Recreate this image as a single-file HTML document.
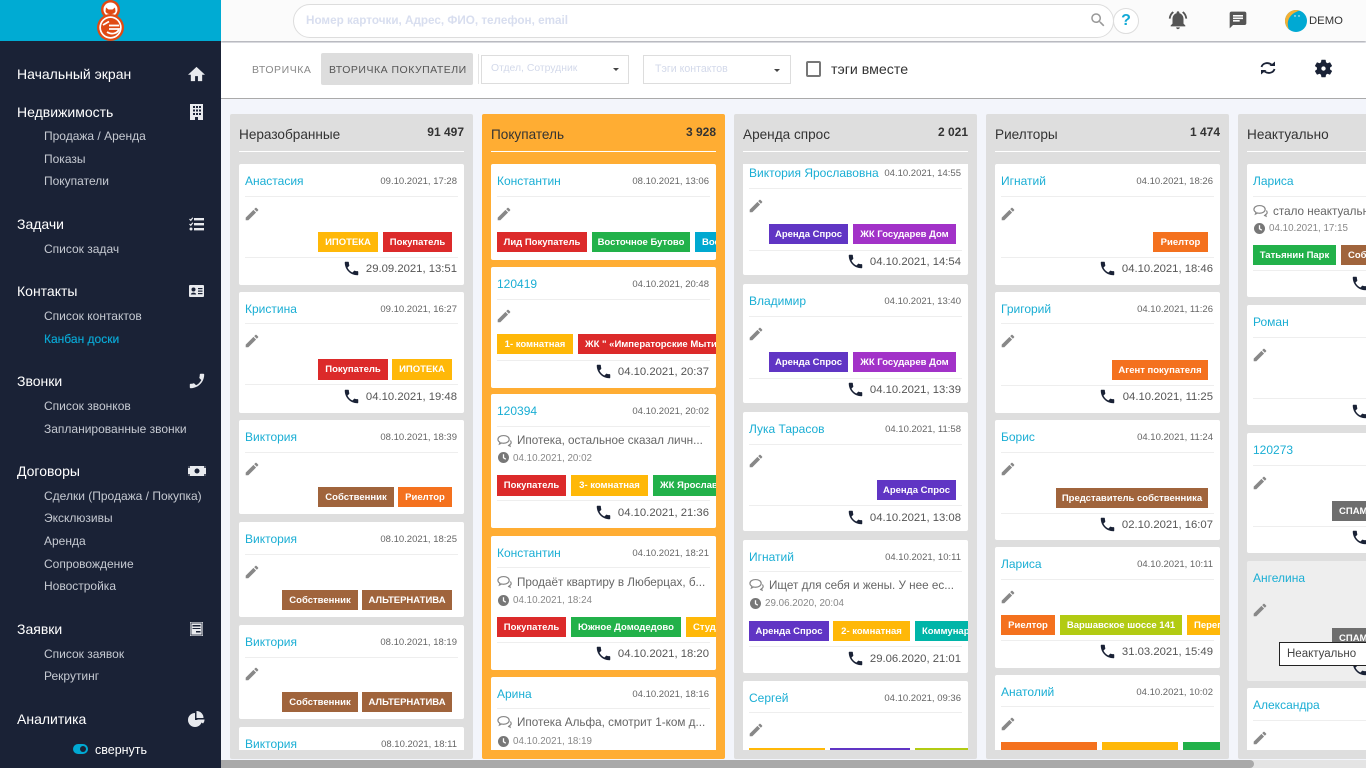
<!DOCTYPE html>
<html lang="ru">
<head>
<meta charset="utf-8">
<title>Канбан доски</title>
<style>
*{box-sizing:border-box}
html,body{margin:0;padding:0;width:1366px;height:768px;overflow:hidden;background:#f3f5fb;font-family:"Liberation Sans","Noto Sans CJK SC",sans-serif}
.a,.a *{position:absolute}
.a{left:0;top:0;width:1366px;height:768px;overflow:hidden}
div,span,svg{white-space:nowrap}
.side{left:0;top:0;width:221px;height:768px;background:#1a2236}
.band{left:0;top:0;width:221px;height:41px;background:#00abd3}
.h{left:17px;height:20px;line-height:20px;font-size:14px;color:#fff}
.s{left:44px;height:20px;line-height:20px;font-size:12px;color:#c6cad2;margin-top:1px}
.col{top:114px;width:243px;height:645px;background:#dedede;border-radius:2px}
.ct{top:126px;font-size:13.6px;line-height:18px;height:18px;color:#333}
.cc{top:124px;font-size:12px;font-weight:bold;line-height:16px;height:16px;color:#333;width:80px;text-align:right}
.cl{top:151px;width:225px;height:1px;background:#fff}
.clip{left:0;top:0;width:1366px;height:768px}
.card{left:var(--x);width:225px;background:#fff;border-radius:2px}
.n{left:calc(var(--x) + 6px);height:16px;line-height:16px;font-size:12px;color:#1aaed4;margin-top:1px}
.d{left:calc(var(--x) + 99px);width:119px;text-align:right;height:14px;line-height:14px;font-size:9.5px;color:#666;margin-top:1px}
.l{left:calc(var(--x) + 6px);width:213px;height:1px;background:#eee}
.pen{left:calc(var(--x) + 6px);width:14px;height:14px;fill:#888}
.ph{left:calc(var(--x) + 105px);width:15px;height:15px;fill:#1a2236;margin-top:1px}
.pt{left:calc(var(--x) + 99px);width:119px;text-align:right;height:16px;line-height:16px;font-size:11.3px;color:#555;margin-top:1px}
.cm{left:calc(var(--x) + 6px);width:15px;height:14px;fill:none;stroke:#888;stroke-width:1.3}
.ctx{left:calc(var(--x) + 26px);height:16px;line-height:16px;font-size:11.7px;color:#666;margin-top:1px}
.ck{left:calc(var(--x) + 7px);width:11px;height:11px}
.tx{left:calc(var(--x) + 22px);height:14px;line-height:14px;font-size:9.8px;color:#888;margin-top:1px}
.t{height:20px;line-height:21px;font-size:9.5px;font-weight:bold;color:#fff;text-align:center;overflow:hidden}
.tl{text-align:left;padding-left:7px}
.y{background:#ffb808}.r{background:#dc2a2a}.g{background:#22b14a}.b{background:#00a9d0}.p{background:#6035c4}.v{background:#a232c8}.br{background:#a0643c}.o{background:#f4711e}.li{background:#b2cb13}.te{background:#00b5a8}.gr{background:#6e6e6e}
</style>
</head>
<body>
<svg width="0" height="0" style="position:absolute">
<defs>
<symbol id="i-ph" viewBox="2 2 20 20"><path d="M6.620 10.790c1.440 2.830 3.760 5.140 6.590 6.590l2.200-2.200c.27-.27.67-.36 1.020-.24 1.120.37 2.330.57 3.570.57.55 0 1 .45 1 1V20c0 .55-.45 1-1 1-9.390 0-17-7.610-17-17 0-.55.45-1 1-1h3.500c.55 0 1 .45 1 1 0 1.250.2 2.450.57 3.570.11.35.03.74-.25 1.020l-2.200 2.200z"/></symbol>
<symbol id="i-pen" viewBox="2 2 20 20"><path d="M3 17.250V21h3.750L17.810 9.940l-3.750-3.750L3 17.250zM20.710 7.040c.39-.39.39-1.020 0-1.410l-2.340-2.340c-.39-.39-1.020-.39-1.410 0l-1.830 1.830 3.750 3.750 1.830-1.830z"/></symbol>
<symbol id="i-cm" viewBox="0 0 16 14"><path d="M7 1.200C3.600 1.200 1 3 1 5.300c0 1.300.9 2.400 2.200 3.200L2.600 10.300l2.400-1.200c.6.2 1.300.3 2 .3 3.400 0 6-1.800 6-4.100S10.400 1.200 7 1.200z"/><path d="M14.200 6.500c.6.600.9 1.200.9 1.900 0 1-.7 1.900-1.700 2.500l.5 1.600-2.200-1"/></symbol>
<symbol id="i-ck" viewBox="0 0 12 12"><circle cx="6" cy="6" r="6" fill="#777"/><path d="M6 2.500V6.300L8.500 7.800" stroke="#fff" stroke-width="1.400" fill="none"/></symbol>
</defs>
</svg>
<div class="a">

<!-- top bars -->
<div style="left:221px;top:0;width:1145px;height:41px;background:#fbfbfb;box-shadow:0 1px 2px rgba(0,0,0,.35)"></div>
<div style="left:221px;top:43px;width:1145px;height:56px;background:#fff;border-bottom:1px solid #aaa"></div>

<div style="left:293px;top:4px;width:821px;height:34px;background:#fff;border:1px solid #ddd;border-radius:17px"></div>
<div style="left:306px;top:13px;height:16px;line-height:16px;font-size:11.7px;font-weight:bold;color:#d8deef">Номер карточки, Адрес, ФИО, телефон, email</div>
<svg style="left:1089px;top:11px" width="18" height="18" viewBox="0 0 24 24" fill="#999"><path d="M15.500 14h-.79l-.28-.27C15.410 12.590 16 11.110 16 9.500 16 5.910 13.090 3 9.500 3S3 5.910 3 9.500 5.910 16 9.500 16c1.610 0 3.090-.59 4.230-1.570l.27.28v.79l5 4.990L20.490 19l-4.990-5zm-6 0C7.010 14 5 11.990 5 9.500S7.010 5 9.500 5 14 7.010 14 9.500 11.990 14 9.500 14z"/></svg>
<div style="left:1113px;top:8px;width:26px;height:26px;border:1px solid #ddd;border-radius:50%;background:#fff;text-align:center;line-height:24px;font-size:16px;font-weight:bold;color:#12a9d6">?</div>
<svg style="left:1167px;top:9px" width="22" height="22" viewBox="0 0 24 24" fill="#555"><path d="M7.580 4.080L6.150 2.650C3.750 4.480 2.170 7.300 2.030 10.500h2c.15-2.650 1.510-4.970 3.550-6.420zm12.390 6.420h2c-.15-3.200-1.730-6.020-4.120-7.850l-1.420 1.430c2.020 1.450 3.390 3.770 3.540 6.420zM18 11c0-3.070-1.640-5.640-4.500-6.320V4c0-.83-.67-1.500-1.500-1.500s-1.500.67-1.500 1.500v.68C7.630 5.360 6 7.920 6 11v5l-2 2v1h16v-1l-2-2v-5zm-6 11c.14 0 .27-.01.4-.04.65-.14 1.180-.58 1.440-1.180.1-.24.15-.5.15-.78h-4c.01 1.100.9 2 2.010 2z"/></svg>
<svg style="left:1228px;top:10px" width="20" height="20" viewBox="0 0 24 24" fill="#555"><path d="M20 2H4c-1.100 0-1.990.9-1.990 2L2 22l4-4h14c1.100 0 2-.9 2-2V4c0-1.100-.9-2-2-2zM6 9h12v2H6V9zm8 5H6v-2h8v2zm4-6H6V6h12v2z"/></svg>
<svg style="left:1285px;top:10px" width="22" height="22" viewBox="0 0 22 22"><circle cx="11" cy="11" r="11" fill="#00a9d3"/><path d="M11 0A11 11 0 0 0 4 19.500C1 13 3 4 14.500 .6 13.400.2 12.200 0 11 0z" fill="#f2b035"/><circle cx="10" cy="6" r=".7" fill="#fff"/><circle cx="14" cy="6" r=".7" fill="#fff"/></svg>
<div style="left:1309px;top:13px;height:16px;line-height:16px;font-size:11.3px;color:#333">DEMO</div>

<div style="left:252px;top:62px;height:16px;line-height:16px;font-size:10.5px;letter-spacing:.55px;color:#888">ВТОРИЧКА</div>
<div style="left:321px;top:53px;width:152px;height:32px;background:#ddd;border-radius:2px"></div>
<div style="left:329px;top:62px;height:16px;line-height:16px;font-size:10.5px;letter-spacing:.5px;color:#555">ВТОРИЧКА ПОКУПАТЕЛИ</div>
<div style="left:478px;top:54px;width:1px;height:30px;background:#e5e5e5"></div>
<div style="left:481px;top:55px;width:148px;height:29px;background:#fff;border:1px solid #ddd"></div>
<div style="left:491px;top:62px;height:14px;line-height:14px;font-size:10.4px;color:#d3d9ea">Отдел, Сотрудник</div>
<div style="left:613px;top:68px;width:0;height:0;border:3px solid transparent;border-top:3px solid #444"></div>
<div style="left:643px;top:55px;width:148px;height:29px;background:#fff;border:1px solid #ddd"></div>
<div style="left:655px;top:62px;height:14px;line-height:14px;font-size:10.6px;color:#d3d9ea">Тэги контактов</div>
<div style="left:774px;top:69px;width:0;height:0;border:3px solid transparent;border-top:3px solid #444"></div>
<div style="left:806px;top:61px;width:15px;height:16px;border:2px solid #777;border-radius:2px;background:#fff"></div>
<div style="left:831px;top:61px;height:18px;line-height:18px;font-size:14.2px;color:#333">тэги вместе</div>
<svg style="left:1258px;top:58px" width="20" height="20" viewBox="0 0 20 20" fill="none" stroke="#1a2236" stroke-width="1.800"><path d="M3.500 9C4.300 5.800 8.800 3.500 13.500 6.500"/><path d="M16.500 11C15.700 14.200 11.200 16.500 6.500 13.500"/><path d="M11.500 8H17V3.500z" fill="#1a2236" stroke="none"/><path d="M8.500 12H3v4.500z" fill="#1a2236" stroke="none"/></svg>
<svg style="left:1313px;top:58px" width="21" height="21" viewBox="0 0 24 24" fill="#1a2236"><path d="M19.430 12.980c.04-.32.07-.64.07-.98s-.03-.66-.07-.98l2.110-1.650c.19-.15.24-.42.12-.64l-2-3.460c-.12-.22-.39-.3-.61-.22l-2.490 1c-.52-.4-1.080-.73-1.690-.98l-.38-2.650C14.460 2.180 14.250 2 14 2h-4c-.25 0-.46.18-.49.42l-.38 2.650c-.61.25-1.170.59-1.690.98l-2.490-1c-.23-.09-.49 0-.61.22l-2 3.460c-.13.22-.07.49.12.64l2.110 1.650c-.04.32-.07.65-.07.98s.03.66.07.98l-2.110 1.650c-.19.15-.24.42-.12.64l2 3.460c.12.22.39.3.61.22l2.490-1c.52.4 1.080.73 1.690.98l.38 2.650c.03.24.24.42.49.42h4c.25 0 .46-.18.49-.42l.38-2.650c.61-.25 1.170-.59 1.690-.98l2.490 1c.23.09.49 0 .61-.22l2-3.460c.12-.22.07-.49-.12-.64l-2.110-1.650z"/><circle cx="12" cy="12" r="2.500" fill="#fff"/></svg>

<!-- columns -->
<div class="col" style="left:230px"></div>
<div class="col" style="left:482px;background:#ffad33"></div>
<div class="col" style="left:734px"></div>
<div class="col" style="left:986px"></div>
<div class="col" style="left:1238px;width:140px"></div>

<div class="ct" style="left:239px">Неразобранные</div><div class="cc" style="left:384px">91 497</div><div class="cl" style="left:239px"></div>
<div class="ct" style="left:491px">Покупатель</div><div class="cc" style="left:636px">3 928</div><div class="cl" style="left:491px"></div>
<div class="ct" style="left:743px">Аренда спрос</div><div class="cc" style="left:888px">2 021</div><div class="cl" style="left:743px"></div>
<div class="ct" style="left:995px">Риелторы</div><div class="cc" style="left:1140px">1 474</div><div class="cl" style="left:995px"></div>
<div class="ct" style="left:1247px">Неактуально</div><div class="cl" style="left:1247px"></div>

<!-- column 1 -->
<div class="clip" style="--x:239px;clip-path:inset(164px 902px 18px 239px)">
<div class="card" style="top:164px;height:121px"></div>
<div class="n" style="top:172px">Анастасия</div><div class="d" style="top:174px">09.10.2021, 17:28</div><div class="l" style="top:196px"></div>
<svg class="pen" style="top:207px"><use href="#i-pen"/></svg>
<div class="t y" style="left:318px;top:232px;width:60px">ИПОТЕКА</div><div class="t r" style="left:383px;top:232px;width:69px">Покупатель</div>
<div class="l" style="top:257px"></div><svg class="ph" style="top:260px"><use href="#i-ph"/></svg><div class="pt" style="top:260px">29.09.2021, 13:51</div>

<div class="card" style="top:292px;height:121px"></div>
<div class="n" style="top:300px">Кристина</div><div class="d" style="top:302px">09.10.2021, 16:27</div><div class="l" style="top:323px"></div>
<svg class="pen" style="top:334px"><use href="#i-pen"/></svg>
<div class="t r" style="left:318px;top:359px;width:70px;height:21px;line-height:22px">Покупатель</div><div class="t y" style="left:392px;top:359px;width:60px;height:21px;line-height:22px">ИПОТЕКА</div>
<div class="l" style="top:384px"></div><svg class="ph" style="top:388px"><use href="#i-ph"/></svg><div class="pt" style="top:388px">04.10.2021, 19:48</div>

<div class="card" style="top:420px;height:94px"></div>
<div class="n" style="top:428px">Виктория</div><div class="d" style="top:430px">08.10.2021, 18:39</div><div class="l" style="top:452px"></div>
<svg class="pen" style="top:462px"><use href="#i-pen"/></svg>
<div class="t br" style="left:318px;top:487px;width:76px">Собственник</div><div class="t o" style="left:398px;top:487px;width:54px">Риелтор</div>

<div class="card" style="top:522px;height:95px"></div>
<div class="n" style="top:530px">Виктория</div><div class="d" style="top:532px">08.10.2021, 18:25</div><div class="l" style="top:554px"></div>
<svg class="pen" style="top:565px"><use href="#i-pen"/></svg>
<div class="t br" style="left:282px;top:590px;width:76px">Собственник</div><div class="t br" style="left:362px;top:590px;width:90px">АЛЬТЕРНАТИВА</div>

<div class="card" style="top:625px;height:94px"></div>
<div class="n" style="top:633px">Виктория</div><div class="d" style="top:635px">08.10.2021, 18:19</div><div class="l" style="top:657px"></div>
<svg class="pen" style="top:667px"><use href="#i-pen"/></svg>
<div class="t br" style="left:282px;top:692px;width:76px">Собственник</div><div class="t br" style="left:362px;top:692px;width:90px">АЛЬТЕРНАТИВА</div>

<div class="card" style="top:727px;height:40px"></div>
<div class="n" style="top:735px">Виктория</div><div class="d" style="top:737px">08.10.2021, 18:11</div>
</div>

<!-- column 2 -->
<div class="clip" style="--x:491px;clip-path:inset(164px 650px 18px 491px)">
<div class="card" style="top:164px;height:96px"></div>
<div class="n" style="top:172px">Константин</div><div class="d" style="top:174px">08.10.2021, 13:06</div><div class="l" style="top:196px"></div>
<svg class="pen" style="top:207px"><use href="#i-pen"/></svg>
<div class="t r" style="left:497px;top:232px;width:90px">Лид Покупатель</div><div class="t g" style="left:592px;top:232px;width:98px">Восточное Бутово</div><div class="t b tl" style="left:695px;top:232px;width:60px">Восточное</div>

<div class="card" style="top:267px;height:121px"></div>
<div class="n" style="top:275px">120419</div><div class="d" style="top:277px">04.10.2021, 20:48</div><div class="l" style="top:299px"></div>
<svg class="pen" style="top:309px"><use href="#i-pen"/></svg>
<div class="t y" style="left:497px;top:334px;width:76px">1- комнатная</div><div class="t r tl" style="left:578px;top:334px;width:180px">ЖК " «Императорские Мытищи»</div>
<div class="l" style="top:360px"></div><svg class="ph" style="top:363px"><use href="#i-ph"/></svg><div class="pt" style="top:363px">04.10.2021, 20:37</div>

<div class="card" style="top:394px;height:134px"></div>
<div class="n" style="top:402px">120394</div><div class="d" style="top:404px">04.10.2021, 20:02</div><div class="l" style="top:426px"></div>
<svg class="cm" style="top:434px"><use href="#i-cm"/></svg><div class="ctx" style="top:432px">Ипотека, остальное сказал личн...</div>
<svg class="ck" style="top:452px"><use href="#i-ck"/></svg><div class="tx" style="top:451px">04.10.2021, 20:02</div>
<div class="t r" style="left:497px;top:475px;width:69px;height:21px;line-height:22px">Покупатель</div><div class="t y" style="left:571px;top:475px;width:77px;height:21px;line-height:22px">3- комнатная</div><div class="t g tl" style="left:653px;top:475px;width:90px;height:21px;line-height:22px">ЖК Ярославский</div>
<div class="l" style="top:500px"></div><svg class="ph" style="top:504px"><use href="#i-ph"/></svg><div class="pt" style="top:504px">04.10.2021, 21:36</div>

<div class="card" style="top:536px;height:134px"></div>
<div class="n" style="top:544px">Константин</div><div class="d" style="top:546px">04.10.2021, 18:21</div><div class="l" style="top:567px"></div>
<svg class="cm" style="top:575px"><use href="#i-cm"/></svg><div class="ctx" style="top:574px">Продаёт квартиру в Люберцах, б...</div>
<svg class="ck" style="top:595px"><use href="#i-ck"/></svg><div class="tx" style="top:593px">04.10.2021, 18:24</div>
<div class="t r" style="left:497px;top:617px;width:69px">Покупатель</div><div class="t g" style="left:571px;top:617px;width:110px">Южное Домодедово</div><div class="t y tl" style="left:686px;top:617px;width:80px">Студия</div>
<div class="l" style="top:642px"></div><svg class="ph" style="top:645px"><use href="#i-ph"/></svg><div class="pt" style="top:645px">04.10.2021, 18:20</div>

<div class="card" style="top:677px;height:90px"></div>
<div class="n" style="top:685px">Арина</div><div class="d" style="top:687px">04.10.2021, 18:16</div><div class="l" style="top:708px"></div>
<svg class="cm" style="top:715px"><use href="#i-cm"/></svg><div class="ctx" style="top:714px">Ипотека Альфа, смотрит 1-ком д...</div>
<svg class="ck" style="top:736px"><use href="#i-ck"/></svg><div class="tx" style="top:734px">04.10.2021, 18:19</div>
</div>

<!-- column 3 -->
<div class="clip" style="--x:743px;clip-path:inset(164px 398px 18px 743px)">
<div class="card" style="top:156px;height:119px"></div>
<div class="n" style="top:164px">Виктория Ярославовна</div><div class="d" style="top:166px">04.10.2021, 14:55</div><div class="l" style="top:188px"></div>
<svg class="pen" style="top:199px"><use href="#i-pen"/></svg>
<div class="t p" style="left:769px;top:224px;width:79px">Аренда Спрос</div><div class="t v" style="left:853px;top:224px;width:103px">ЖК Государев Дом</div>
<div class="l" style="top:250px"></div><svg class="ph" style="top:253px"><use href="#i-ph"/></svg><div class="pt" style="top:253px">04.10.2021, 14:54</div>

<div class="card" style="top:284px;height:119px"></div>
<div class="n" style="top:292px">Владимир</div><div class="d" style="top:294px">04.10.2021, 13:40</div><div class="l" style="top:316px"></div>
<svg class="pen" style="top:327px"><use href="#i-pen"/></svg>
<div class="t p" style="left:769px;top:352px;width:79px">Аренда Спрос</div><div class="t v" style="left:853px;top:352px;width:103px">ЖК Государев Дом</div>
<div class="l" style="top:378px"></div><svg class="ph" style="top:381px"><use href="#i-ph"/></svg><div class="pt" style="top:381px">04.10.2021, 13:39</div>

<div class="card" style="top:412px;height:119px"></div>
<div class="n" style="top:420px">Лука Тарасов</div><div class="d" style="top:422px">04.10.2021, 11:58</div><div class="l" style="top:444px"></div>
<svg class="pen" style="top:454px"><use href="#i-pen"/></svg>
<div class="t p" style="left:877px;top:480px;width:79px">Аренда Спрос</div>
<div class="l" style="top:505px"></div><svg class="ph" style="top:509px"><use href="#i-ph"/></svg><div class="pt" style="top:509px">04.10.2021, 13:08</div>

<div class="card" style="top:540px;height:133px"></div>
<div class="n" style="top:548px">Игнатий</div><div class="d" style="top:550px">04.10.2021, 10:11</div><div class="l" style="top:571px"></div>
<svg class="cm" style="top:578px"><use href="#i-cm"/></svg><div class="ctx" style="top:577px">Ищет для себя и жены. У нее ес...</div>
<svg class="ck" style="top:598px"><use href="#i-ck"/></svg><div class="tx" style="top:596px">29.06.2020, 20:04</div>
<div class="t p" style="left:749px;top:621px;width:80px">Аренда Спрос</div><div class="t y" style="left:833px;top:621px;width:77px">2- комнатная</div><div class="t te tl" style="left:915px;top:621px;width:80px">Коммунарка</div>
<div class="l" style="top:646px"></div><svg class="ph" style="top:650px"><use href="#i-ph"/></svg><div class="pt" style="top:650px">29.06.2020, 21:01</div>

<div class="card" style="top:681px;height:90px"></div>
<div class="n" style="top:689px">Сергей</div><div class="d" style="top:691px">04.10.2021, 09:36</div><div class="l" style="top:712px"></div>
<svg class="pen" style="top:723px"><use href="#i-pen"/></svg>
<div class="t y" style="left:749px;top:748px;width:76px"></div><div class="t p" style="left:830px;top:748px;width:80px"></div><div class="t li" style="left:915px;top:748px;width:80px"></div>
</div>

<!-- column 4 -->
<div class="clip" style="--x:995px;clip-path:inset(164px 146px 18px 995px)">
<div class="card" style="top:164px;height:121px"></div>
<div class="n" style="top:172px">Игнатий</div><div class="d" style="top:174px">04.10.2021, 18:26</div><div class="l" style="top:196px"></div>
<svg class="pen" style="top:207px"><use href="#i-pen"/></svg>
<div class="t o" style="left:1153px;top:232px;width:55px">Риелтор</div>
<div class="l" style="top:257px"></div><svg class="ph" style="top:260px"><use href="#i-ph"/></svg><div class="pt" style="top:260px">04.10.2021, 18:46</div>

<div class="card" style="top:292px;height:121px"></div>
<div class="n" style="top:300px">Григорий</div><div class="d" style="top:302px">04.10.2021, 11:26</div><div class="l" style="top:323px"></div>
<svg class="pen" style="top:334px"><use href="#i-pen"/></svg>
<div class="t o" style="left:1112px;top:360px;width:96px">Агент покупателя</div>
<div class="l" style="top:385px"></div><svg class="ph" style="top:388px"><use href="#i-ph"/></svg><div class="pt" style="top:388px">04.10.2021, 11:25</div>

<div class="card" style="top:420px;height:120px"></div>
<div class="n" style="top:428px">Борис</div><div class="d" style="top:430px">04.10.2021, 11:24</div><div class="l" style="top:452px"></div>
<svg class="pen" style="top:462px"><use href="#i-pen"/></svg>
<div class="t br" style="left:1056px;top:488px;width:152px">Представитель собственника</div>
<div class="l" style="top:513px"></div><svg class="ph" style="top:516px"><use href="#i-ph"/></svg><div class="pt" style="top:516px">02.10.2021, 16:07</div>

<div class="card" style="top:547px;height:121px"></div>
<div class="n" style="top:555px">Лариса</div><div class="d" style="top:557px">04.10.2021, 10:11</div><div class="l" style="top:579px"></div>
<svg class="pen" style="top:590px"><use href="#i-pen"/></svg>
<div class="t o" style="left:1001px;top:615px;width:54px">Риелтор</div><div class="t li" style="left:1060px;top:615px;width:122px">Варшавское шоссе 141</div><div class="t y tl" style="left:1187px;top:615px;width:80px">Перепланировка</div>
<div class="l" style="top:640px"></div><svg class="ph" style="top:643px"><use href="#i-ph"/></svg><div class="pt" style="top:643px">31.03.2021, 15:49</div>

<div class="card" style="top:675px;height:95px"></div>
<div class="n" style="top:683px">Анатолий</div><div class="d" style="top:685px">04.10.2021, 10:02</div><div class="l" style="top:706px"></div>
<svg class="pen" style="top:717px"><use href="#i-pen"/></svg>
<div class="t o" style="left:1001px;top:742px;width:96px"></div><div class="t y" style="left:1102px;top:742px;width:76px"></div><div class="t g" style="left:1183px;top:742px;width:60px"></div>
</div>

<!-- column 5 -->
<div class="clip" style="--x:1247px;clip-path:inset(164px 0 18px 1247px)">
<div class="card" style="top:164px;height:133px"></div>
<div class="n" style="top:172px">Лариса</div><div class="l" style="top:196px"></div>
<svg class="cm" style="top:204px"><use href="#i-cm"/></svg><div class="ctx" style="top:203px">стало неактуально</div>
<svg class="ck" style="top:223px"><use href="#i-ck"/></svg><div class="tx" style="top:221px">04.10.2021, 17:15</div>
<div class="t g" style="left:1253px;top:245px;width:83px">Татьянин Парк</div><div class="t br tl" style="left:1341px;top:245px;width:80px">Собственник</div>
<div class="l" style="top:270px"></div><svg class="ph" style="top:275px"><use href="#i-ph"/></svg>

<div class="card" style="top:305px;height:120px"></div>
<div class="n" style="top:313px">Роман</div><div class="l" style="top:337px"></div>
<svg class="pen" style="top:348px"><use href="#i-pen"/></svg>
<div class="l" style="top:398px"></div><svg class="ph" style="top:403px"><use href="#i-ph"/></svg>

<div class="card" style="top:433px;height:120px"></div>
<div class="n" style="top:441px">120273</div><div class="l" style="top:465px"></div>
<svg class="pen" style="top:476px"><use href="#i-pen"/></svg>
<div class="t gr tl" style="left:1332px;top:501px;width:60px">СПАМ</div>
<div class="l" style="top:526px"></div><svg class="ph" style="top:529px"><use href="#i-ph"/></svg>

<div class="card" style="top:561px;height:120px;background:#eee"></div>
<div class="n" style="top:569px">Ангелина</div>
<svg class="pen" style="top:603px"><use href="#i-pen"/></svg>
<div class="t gr tl" style="left:1332px;top:628px;width:60px">СПАМ</div>
<svg class="ph" style="top:660px"><use href="#i-ph"/></svg>

<div class="card" style="top:688px;height:90px"></div>
<div class="n" style="top:696px">Александра</div><div class="l" style="top:720px"></div>
<svg class="pen" style="top:731px"><use href="#i-pen"/></svg>
</div>

<div style="left:1279px;top:642px;width:88px;height:24px;background:#fff;border:1px solid #222;line-height:22px;font-size:11.5px;color:#444;padding-left:7px">Неактуально</div>

<!-- scrollbar -->
<div style="left:221px;top:760px;width:1145px;height:8px;background:#e4e4e4"></div>
<div style="left:221px;top:760px;width:1033px;height:8px;background:#a9a9a9;border-radius:0 4px 4px 0"></div>

<!-- sidebar -->
<div class="side"></div>
<div class="band"></div>
<svg style="left:96px;top:0" width="29" height="41" viewBox="0 0 29 41">
<circle cx="14.500" cy="9.500" r="9.500" fill="#e04a14"/>
<circle cx="14.500" cy="9.500" r="7" fill="#fff"/>
<path d="M9.500 11.500L10 7.500 12.500 9.500H16.500L19 7.500 19.500 11.500C18 15 11 15 9.500 11.500z" fill="#e04a14"/>
<circle cx="14.500" cy="27.500" r="13.500" fill="#e04a14"/>
<circle cx="14.500" cy="27.500" r="11.200" fill="#fff"/>
<circle cx="14.500" cy="27.500" r="9.500" fill="#e04a14"/>
<path d="M7 25L13 21.500M13 29H23C22 33.500 15.500 35 11 32" fill="none" stroke="#fff" stroke-width="1.800"/>
<path d="M13 25.500H23" stroke="#fff" stroke-width="1.800"/>
</svg>

<div class="h" style="top:64px">Начальный экран</div>
<div class="h" style="top:102px">Недвижимость</div>
<div class="s" style="top:125px">Продажа / Аренда</div>
<div class="s" style="top:148px">Показы</div>
<div class="s" style="top:170px">Покупатели</div>
<div class="h" style="top:214px">Задачи</div>
<div class="s" style="top:238px">Список задач</div>
<div class="h" style="top:281px">Контакты</div>
<div class="s" style="top:305px">Список контактов</div>
<div class="s" style="top:328px;color:#0aa6d2;text-shadow:0 0 .4px #0aa6d2">Канбан доски</div>
<div class="h" style="top:371px">Звонки</div>
<div class="s" style="top:395px">Список звонков</div>
<div class="s" style="top:418px">Запланированные звонки</div>
<div class="h" style="top:461px">Договоры</div>
<div class="s" style="top:485px">Сделки (Продажа / Покупка)</div>
<div class="s" style="top:507px">Эксклюзивы</div>
<div class="s" style="top:530px">Аренда</div>
<div class="s" style="top:553px">Сопровождение</div>
<div class="s" style="top:575px">Новостройка</div>
<div class="h" style="top:619px">Заявки</div>
<div class="s" style="top:643px">Список заявок</div>
<div class="s" style="top:665px">Рекрутинг</div>
<div class="h" style="top:709px">Аналитика</div>

<svg style="left:188px;top:66px" width="17" height="16" viewBox="0 0 24 22" fill="#e8eaee"><path d="M10 21v-7h4v7h6v-9h4L12 1 0 12h4v9z"/></svg>
<svg style="left:190px;top:104px" width="13" height="16" viewBox="0 0 13 16"><rect width="13" height="16" fill="#e8eaee"/><g fill="#1a2236"><rect x="3" y="2" width="2" height="2"/><rect x="6" y="2" width="2" height="2"/><rect x="9" y="2" width="2" height="2"/><rect x="3" y="5.500" width="2" height="2"/><rect x="6" y="5.500" width="2" height="2"/><rect x="9" y="5.500" width="2" height="2"/><rect x="3" y="9" width="2" height="2"/><rect x="6" y="9" width="2" height="2"/><rect x="9" y="9" width="2" height="2"/><rect x="5" y="13" width="3" height="3"/></g></svg>
<svg style="left:189px;top:217px" width="15" height="14" viewBox="0 0 15 14" fill="#e8eaee"><rect x="5" y="1" width="10" height="2.400"/><rect x="5" y="6" width="10" height="2.400"/><rect x="5" y="11" width="10" height="2.400"/><path d="M.5 2L1.800 3.300 3.800.8" fill="none" stroke="#e8eaee" stroke-width="1.200"/><path d="M.5 7L1.800 8.300 3.800 5.800" fill="none" stroke="#e8eaee" stroke-width="1.200"/><circle cx="2" cy="12" r="1.500"/></svg>
<svg style="left:189px;top:285px" width="15" height="12" viewBox="0 0 15 12"><rect width="15" height="12" rx="1" fill="#e8eaee"/><circle cx="4.500" cy="4.500" r="2" fill="#1a2236"/><path d="M1.800 9.500C2 7 7 7 7.200 9.500z" fill="#1a2236"/><g fill="#1a2236"><rect x="9" y="3" width="4.500" height="1.200"/><rect x="9" y="5.500" width="4.500" height="1.200"/><rect x="9" y="8" width="4.500" height="1.200"/></g></svg>
<svg style="left:189px;top:373px;transform:scaleX(-1)" width="16" height="16" viewBox="2 2 20 20" fill="#e8eaee"><path d="M6.620 10.790c1.440 2.830 3.760 5.140 6.590 6.590l2.200-2.200c.27-.27.67-.36 1.020-.24 1.120.37 2.330.57 3.570.57.55 0 1 .45 1 1V20c0 .55-.45 1-1 1-9.390 0-17-7.610-17-17 0-.55.45-1 1-1h3.500c.55 0 1 .45 1 1 0 1.250.2 2.450.57 3.570.11.35.03.74-.25 1.020l-2.200 2.200z"/></svg>
<svg style="left:188px;top:466px" width="18" height="10" viewBox="0 0 18 10"><rect width="18" height="10" fill="#e8eaee"/><circle cx="9" cy="5" r="2.500" fill="#1a2236"/><circle cx="1" cy="1" r="1" fill="#1a2236"/><circle cx="17" cy="1" r="1" fill="#1a2236"/><circle cx="1" cy="9" r="1" fill="#1a2236"/><circle cx="17" cy="9" r="1" fill="#1a2236"/></svg>
<svg style="left:190px;top:622px" width="13" height="14" viewBox="0 0 13 14"><rect width="13" height="14" fill="#e8eaee"/><rect x="1" y="1" width="11" height="12" fill="none" stroke="#1a2236" stroke-width=".8"/><g fill="#1a2236"><rect x="2.500" y="3" width="8" height="1.500"/><rect x="2.500" y="6" width="8" height="1"/><rect x="6" y="9" width="4.500" height="1.500"/></g></svg>
<svg style="left:188px;top:711px" width="17" height="16" viewBox="0 0 17 16" fill="#e8eaee"><path d="M7 2A7 7 0 1 0 14 9H7z"/><path d="M8.500 0A7 7 0 0 1 15.500 7H8.500z"/><path d="M9 8.500H16.500C16.500 10 16 11.500 15 12.500z"/></svg>

<div style="left:73px;top:744px;width:15px;height:10px;border-radius:5px;background:#00a9d3"></div>
<div style="left:80px;top:746px;width:6px;height:6px;border-radius:50%;background:#1a2236"></div>
<div style="left:95px;top:741px;height:18px;line-height:18px;font-size:12.5px;color:#fff">свернуть</div>
</div>
</body>
</html>
